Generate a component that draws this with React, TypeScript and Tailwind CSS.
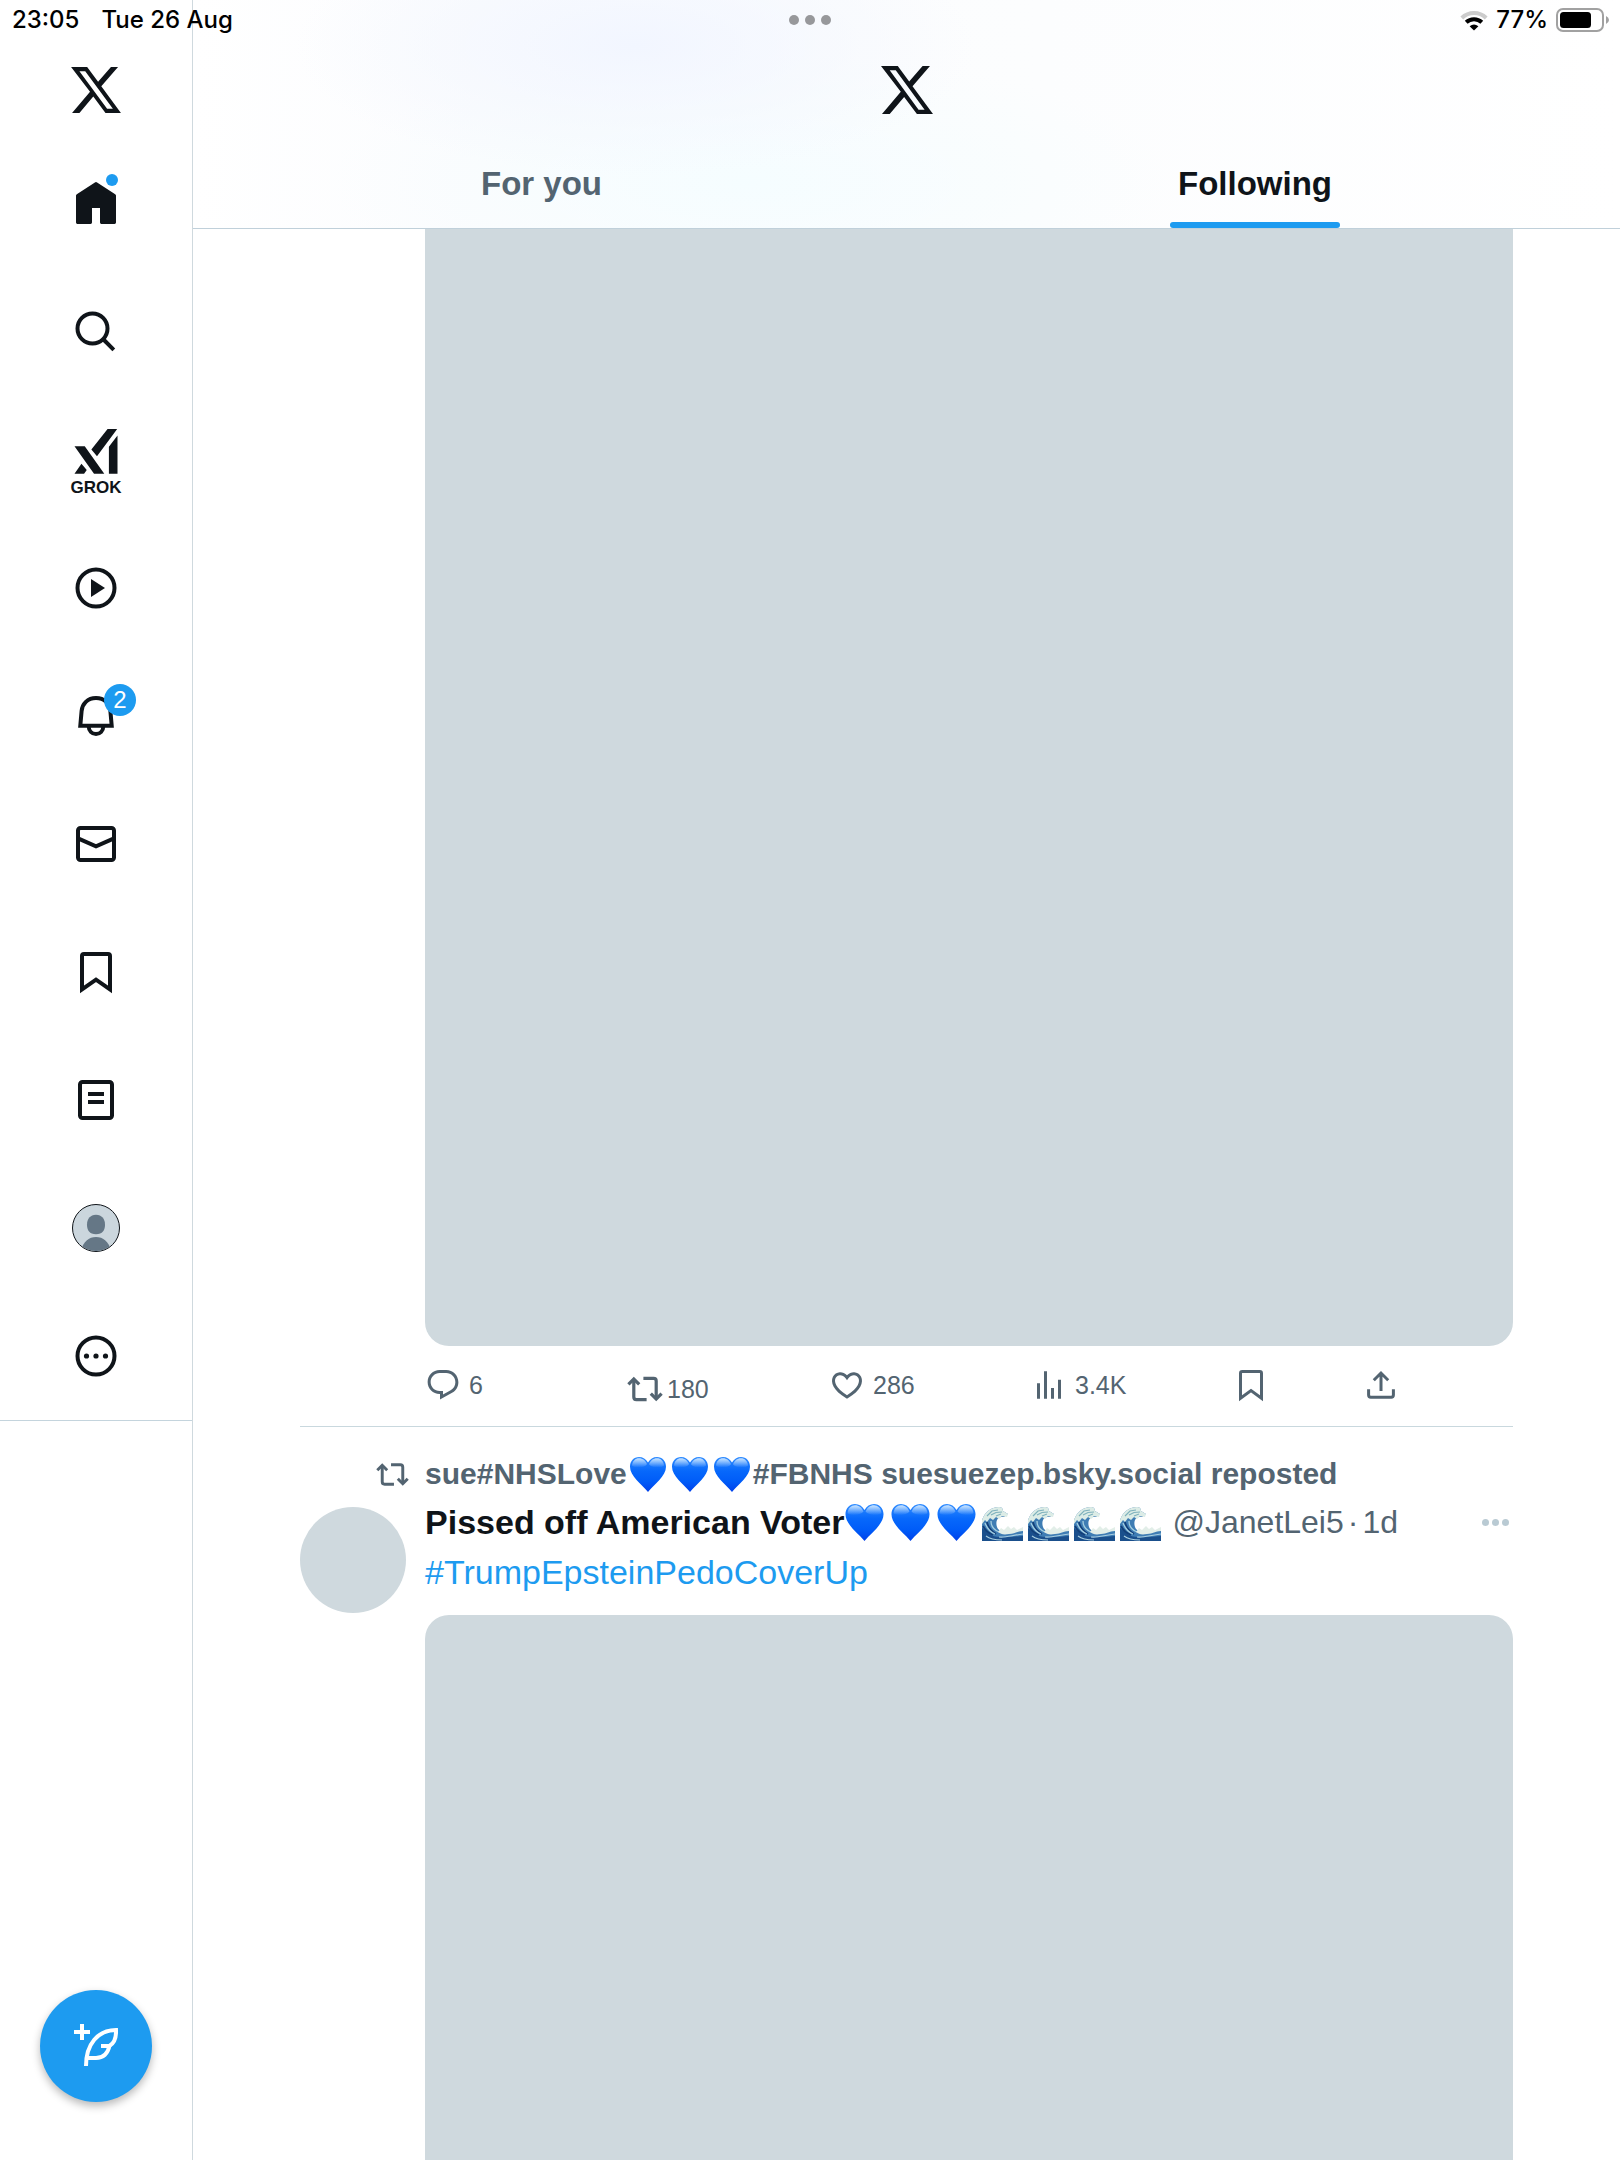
import React from "react";

type IconProps = { className?: string };

function XLogo({ className }: IconProps) {
  return (
    <svg viewBox="544 199 155 143" className={className} fill="currentColor" aria-hidden="true">
      <path
        fillRule="evenodd"
        d="M544 199H594L628 245L668 199H690L638 259L699 342H651L613 291L570 342H547L603 276ZM570 212L656 329H674L588 212Z"
      />
    </svg>
  );
}

function NavIcon({ children }: { children: React.ReactNode }) {
  return (
    <svg
      viewBox="0 0 48 48"
      className="size-12 overflow-visible"
      fill="none"
      stroke="currentColor"
      strokeWidth="4"
      aria-hidden="true"
    >
      {children}
    </svg>
  );
}

const HomeIcon = () => (
  <NavIcon>
    <path
      stroke="none"
      fill="currentColor"
      d="M22.9 2.4Q24 1.6 25.1 2.4L43.2 14.2Q44 14.8 44 15.6V42.6Q44 44 42.6 44H29.4Q28 44 28 42.6V28H20V42.6Q20 44 18.6 44H5.4Q4 44 4 42.6V15.6Q4 14.8 4.8 14.2Z"
    />
  </NavIcon>
);

const SearchIcon = () => (
  <NavIcon>
    <circle cx="20.5" cy="20.5" r="15" />
    <path d="M31 31L41.8 41.8" />
  </NavIcon>
);

const GrokIcon = () => (
  <span className="flex flex-col items-center gap-1 pt-1.5">
    <svg viewBox="103 447 132 136" className="h-[45px] w-[44px]" fill="currentColor" aria-hidden="true">
      <path d="M104 499H135L194 582H163ZM104 582L125 552L141 571L133 582ZM204 447H233L172 529L155 509ZM234 467V582H208V501Z" />
    </svg>
    <span className="text-[17px] leading-5 font-bold">GROK</span>
  </span>
);

const PlayIcon = () => (
  <NavIcon>
    <circle cx="24" cy="24" r="18.5" />
    <path stroke="none" fill="currentColor" d="M19 15L33 24L19 33Z" />
  </NavIcon>
);

const BellIcon = () => (
  <NavIcon>
    <path d="M24 6C15.5 6 10.2 12 9.6 19L8.3 33.8H39.7L38.4 19C37.8 12 32.5 6 24 6Z" />
    <path d="M16.6 34C16.8 39 20 42 24 42C28 42 31.2 39 31.4 34" />
  </NavIcon>
);

const MailIcon = () => (
  <NavIcon>
    <rect x="6" y="8" width="36" height="32" rx="2.5" />
    <path d="M6 18.4L24 26.4L42 18.4" />
  </NavIcon>
);

const BookmarkIcon = () => (
  <NavIcon>
    <path d="M10 41.4V8Q10 6 12 6H36Q38 6 38 8V41.4L24 31.6Z" />
  </NavIcon>
);

const ListIcon = () => (
  <NavIcon>
    <rect x="8" y="6" width="32" height="36" rx="2.5" />
    <path d="M16 18H32M16 26H32" />
  </NavIcon>
);

const ProfileIcon = () => (
  <span className="block size-12 overflow-hidden rounded-full border border-[#0f1419] bg-[#cbd6dd]">
    <svg viewBox="1 1 46 46" className="size-full" fill="#657786" aria-hidden="true">
      <path d="M24 10.7C29.8 10.7 33 15 33 20.5C33 26.5 30.5 30.2 24 30.2C17.5 30.2 15 26.5 15 20.5C15 15 18.2 10.7 24 10.7Z" />
      <path d="M9 47C11 37.5 17 33 24 33C31 33 37 37.5 39 47Z" />
    </svg>
  </span>
);

const MoreIcon = () => (
  <NavIcon>
    <circle cx="24" cy="24" r="18.5" />
    <g stroke="none" fill="currentColor">
      <circle cx="14.5" cy="24" r="2.6" />
      <circle cx="24" cy="24" r="2.6" />
      <circle cx="33.5" cy="24" r="2.6" />
    </g>
  </NavIcon>
);

const navItems = [
  { label: "Home", Icon: HomeIcon, dot: true },
  { label: "Search", Icon: SearchIcon },
  { label: "Grok", Icon: GrokIcon },
  { label: "Video", Icon: PlayIcon },
  { label: "Notifications", Icon: BellIcon, badge: "2" },
  { label: "Messages", Icon: MailIcon },
  { label: "Bookmarks", Icon: BookmarkIcon },
  { label: "Lists", Icon: ListIcon },
  { label: "Profile", Icon: ProfileIcon },
  { label: "More", Icon: MoreIcon },
];

function Sidebar() {
  return (
    <aside className="flex w-[193px] shrink-0 flex-col items-center border-r border-[#cfd9de] bg-white">
      <a href="#home" aria-label="X" className="mt-[67px] mb-[27px]">
        <XLogo className="h-[46px] w-[50px]" />
      </a>
      <nav className="w-full border-b border-[#c4d4dd]">
        {navItems.map(({ label, Icon, dot, badge }) => (
          <a key={label} href="#nav" aria-label={label} className="flex h-32 items-center justify-center">
            <span className="relative">
              <Icon />
              {dot && <span className="absolute -top-1.5 right-0.5 size-3 rounded-full bg-[#1d9bf0]" />}
              {badge && (
                <span className="absolute -top-2 left-8 flex size-8 items-center justify-center rounded-full bg-[#1d9bf0] text-2xl leading-none text-white">
                  {badge}
                </span>
              )}
            </span>
          </a>
        ))}
      </nav>
      <button
        type="button"
        aria-label="Compose post"
        className="mt-auto mb-[58px] flex size-28 items-center justify-center rounded-full bg-[#1d9bf0] text-white shadow-[0_4px_8px_rgba(0,0,0,0.28)]"
      >
        <svg viewBox="162 192 132 132" className="size-11" fill="none" stroke="currentColor" strokeWidth="12" aria-hidden="true">
          <path d="M186 192V240M162 216H210" />
          <path d="M198 318C198 252 234 210 288 210C289 232 284 249 268 258H243" />
          <path d="M269 256C263 282 247 294 228 294H200" />
        </svg>
      </button>
    </aside>
  );
}

function StatusBar() {
  return (
    <div className="absolute inset-x-0 top-0 grid h-10 grid-cols-3 items-center px-2.5 font-['Inter',sans-serif] text-2xl leading-10 font-medium text-black">
      <div className="flex gap-[22px] pl-0.5">
        <span>23:05</span>
        <span>Tue 26 Aug</span>
      </div>
      <div className="flex justify-center gap-1.5">
        <span className="size-2.5 rounded-full bg-[#97989b]" />
        <span className="size-2.5 rounded-full bg-[#97989b]" />
        <span className="size-2.5 rounded-full bg-[#97989b]" />
      </div>
      <div className="flex items-center justify-end">
        <svg viewBox="0 0 28 21" className="mr-2 h-[21px] w-[28px]" fill="none" aria-hidden="true">
          <path d="M1.8 8A17.5 17.5 0 0 1 26.2 8" stroke="#cccccc" strokeWidth="4" />
          <path d="M6.2 12.3A11.2 11.2 0 0 1 21.8 12.3" stroke="#000" strokeWidth="4" />
          <path d="M14 20.5L9.6 16.3Q14 12.8 18.4 16.3Z" fill="#000" />
        </svg>
        <span>77%</span>
        <svg viewBox="0 0 54 24" className="ml-2 h-6 w-[54px]" aria-hidden="true">
          <rect x="1" y="1" width="46" height="22" rx="6" fill="none" stroke="#a1a1a1" strokeWidth="2" />
          <rect x="4" y="4" width="31" height="16" rx="3.5" fill="#000" />
          <path d="M50 8Q53 9.5 53 12Q53 14.5 50 16Z" fill="#a1a1a1" />
        </svg>
      </div>
    </div>
  );
}

function Header() {
  return (
    <header className="flex h-[229px] flex-col items-center border-b border-[#c0d0da] bg-[radial-gradient(ellipse_340px_130px_at_31%_20%,#f2f6ff,transparent),radial-gradient(ellipse_420px_130px_at_39%_80%,#f5fdff,transparent),linear-gradient(90deg,#ffffff,#fbfcfe_20%,#fcfdfe_60%,#ffffff)]">
      <XLogo className="mt-[66px] h-12 w-[52px]" />
      <div role="tablist" className="mt-auto flex w-full text-[33px] leading-10 font-bold">
        <button type="button" role="tab" aria-selected="false" className="flex flex-auto justify-center text-[#536471]">
          <span className="px-2 pb-6">For you</span>
        </button>
        <button type="button" role="tab" aria-selected="true" className="flex flex-auto justify-center text-[#0f1419]">
          <span className="flex flex-col">
            <span className="px-2 pb-[18px]">Following</span>
            <span className="h-1.5 rounded-full bg-[#1d9bf0]" />
          </span>
        </button>
      </div>
    </header>
  );
}

function RepostIcon({ className }: IconProps) {
  return (
    <svg viewBox="0 0 36 36" className={className} fill="none" stroke="currentColor" strokeWidth="3.2" aria-hidden="true">
      <path d="M6.8 8V26Q6.8 28.6 9.4 28.6H19.6M16.4 7.4H26.6Q29.2 7.4 29.2 10V28" />
      <path d="M1.4 13.4L6.8 8L12.2 13.4M23.8 22.6L29.2 28L34.6 22.6" />
    </svg>
  );
}

function ReplyIcon() {
  return (
    <svg viewBox="0 0 24 24" className="size-9" fill="currentColor" aria-hidden="true">
      <path d="M1.751 10c0-4.42 3.584-8 8.005-8h4.366c4.49 0 8.129 3.64 8.129 8.13 0 2.96-1.607 5.68-4.196 7.11l-8.054 4.46v-3.69h-.067c-4.49.1-8.183-3.51-8.183-8.01zm8.005-6c-3.317 0-6.005 2.69-6.005 6 0 3.37 2.77 6.08 6.138 6.01l.351-.01h1.761v2.3l5.087-2.81c1.951-1.08 3.163-3.13 3.163-5.36 0-3.39-2.744-6.13-6.129-6.13H9.756z" />
    </svg>
  );
}

function HeartIcon() {
  return (
    <svg viewBox="0 0 24 24" className="size-9" fill="currentColor" aria-hidden="true">
      <path d="M16.697 5.5c-1.222-.06-2.679.51-3.89 2.16l-.805 1.09-.806-1.09C9.984 6.01 8.526 5.44 7.304 5.5c-1.243.07-2.349.78-2.91 1.91-.552 1.12-.633 2.78.479 4.82 1.074 1.97 3.257 4.27 7.129 6.61 3.87-2.34 6.052-4.64 7.126-6.61 1.111-2.04 1.03-3.7.477-4.82-.561-1.13-1.666-1.84-2.908-1.91zm4.187 7.69c-1.351 2.48-4.001 5.12-8.379 7.67l-.503.3-.504-.3c-4.379-2.55-7.029-5.19-8.382-7.67-1.36-2.5-1.41-4.86-.514-6.67.887-1.79 2.647-2.91 4.601-3.01 1.651-.09 3.368.56 4.798 2.01 1.429-1.45 3.146-2.1 4.796-2.01 1.954.1 3.714 1.22 4.601 3.01.896 1.81.846 4.17-.514 6.67z" />
    </svg>
  );
}

function ViewsIcon() {
  return (
    <svg viewBox="0 0 36 36" className="size-9" fill="currentColor" aria-hidden="true">
      <path d="M6 16.3H9V31.8H6ZM13 4.3H16V31.8H13ZM20 21H23V31.8H20ZM27 12.7H30V31.8H27Z" />
    </svg>
  );
}

function SaveIcon() {
  return (
    <svg viewBox="0 0 36 36" className="size-9" fill="none" stroke="currentColor" strokeWidth="3" aria-hidden="true">
      <path d="M7.5 31.2V6.3Q7.5 4.5 9.3 4.5H26.7Q28.5 4.5 28.5 6.3V31.2L18 23.6Z" />
    </svg>
  );
}

function ShareIcon() {
  return (
    <svg viewBox="0 0 36 36" className="size-9" fill="none" stroke="currentColor" strokeWidth="3" aria-hidden="true">
      <path d="M18 24V6M10.8 13.2L18 6L25.2 13.2M5.6 22.3V28Q5.6 30.2 7.8 30.2H28.2Q30.4 30.2 30.4 28V22.3" />
    </svg>
  );
}

function BlueHeart({ className }: IconProps) {
  return (
    <svg viewBox="0 0 36 35" className={className} role="img" aria-label="blue heart">
      <defs>
        <linearGradient id="heartBody" x1="0" y1="0" x2="0" y2="1">
          <stop offset="0" stopColor="#2f8cff" />
          <stop offset="0.4" stopColor="#0768fb" />
          <stop offset="0.7" stopColor="#005cf8" />
          <stop offset="1" stopColor="#0040ea" />
        </linearGradient>
        <linearGradient id="heartShine" x1="0" y1="0" x2="0" y2="1">
          <stop offset="0" stopColor="#c8e3ff" />
          <stop offset="1" stopColor="#c8e3ff" stopOpacity="0" />
        </linearGradient>
      </defs>
      <path
        d="M18 5.6C20 2 23.2 0 27 0C32.2 0 36 4 36 9.8C36 19.4 24.5 27 18 35C11.5 27 0 19.4 0 9.8C0 4 3.8 0 9 0C12.8 0 16 2 18 5.6Z"
        fill="url(#heartBody)"
      />
      <path d="M2 8.5C2.4 4 5.4 1.3 9 1.3C12.8 1.3 15.6 3.6 17 7.2C14.5 11 4 11.5 2 8.5Z" fill="url(#heartShine)" />
      <path d="M34 8.5C33.6 4 30.6 1.3 27 1.3C23.2 1.3 20.4 3.6 19 7.2C21.5 11 32 11.5 34 8.5Z" fill="url(#heartShine)" />
    </svg>
  );
}

function Wave({ className }: IconProps) {
  return (
    <svg viewBox="0 0 41 34" className={className} role="img" aria-label="water wave">
      <path d="M0 34V13C3 5 9 0 17 0C20 0 21 2 21 4L26 7L22 10C16 9 13 14 15 20C17 26 27 25 41 23V34Z" fill="#3f7db4" />
      <path d="M0 34V21C5 25 9 30 18 30C27 31 35 29 41 29V34Z" fill="#1a4f8c" />
      <path d="M0 13C3 5 9 0 17 0C20 0 21 2 21 4L26 7L25 10L20 9L17 12L14 10L11 13L8 11L5 15L3 13L0 17Z" fill="#dcece6" />
      <path d="M5 9L10 4L16 3M9 8L14 5.5L20 5M14 9L19 7" stroke="#7fb2bd" strokeWidth="1.2" fill="none" />
      <path d="M1 19C3 23 6 26 11 28M5 15C6 20 9 24 14 27" stroke="#123f78" strokeWidth="1.8" fill="none" />
      <path d="M3 16C5 21 8 25 13 27M9 14C9 19 12 23 17 25" stroke="#a5cfe0" strokeWidth="1.3" fill="none" />
      <path d="M16 25L19 21L22 23L26 19L29 22L32 20L35 23L41 20V24C35 24 33 27 27 27C21 28 19 27 16 25Z" fill="#e2eee8" />
      <path d="M17 30C23 31 31 28 41 27M4 29C9 33 15 33 20 33" stroke="#a9cfe0" strokeWidth="1.2" fill="none" />
    </svg>
  );
}

const actions = [
  { label: "Reply", count: "6", icon: <ReplyIcon />, style: "gap-2" },
  { label: "Repost", count: "180", icon: <RepostIcon className="size-9" />, style: "gap-1 pt-1" },
  { label: "Like", count: "286", icon: <HeartIcon />, style: "gap-2" },
  { label: "Views", count: "3.4K", icon: <ViewsIcon />, style: "gap-2" },
  { label: "Bookmark", count: "", icon: <SaveIcon />, style: "gap-2" },
  { label: "Share", count: "", icon: <ShareIcon />, style: "gap-2" },
];

function FirstPost() {
  return (
    <article className="border-b border-[#c9d8de] pb-[19px] pl-[125px]">
      <div className="h-[1117px] rounded-b-3xl bg-[#cfd9de]" />
      <div className="mt-[21px] grid grid-cols-[202fr_202fr_202fr_202fr_130fr_150fr] text-[#536471]">
        {actions.map(({ label, count, icon, style }) => (
          <button key={label} type="button" aria-label={`${label} ${count}`} className={`flex h-10 items-start text-[25px] leading-9 ${style}`}>
            {icon}
            {count && <span>{count}</span>}
          </button>
        ))}
      </div>
    </article>
  );
}

function SecondPost() {
  return (
    <article className="flex flex-1 flex-col pt-6">
      <div className="flex h-[46px] items-center text-[30px] leading-[46px] font-bold whitespace-nowrap text-[#536471]">
        <span className="flex w-[125px] shrink-0 justify-end pr-4">
          <RepostIcon className="size-[33px]" />
        </span>
        <span>sue#NHSLove</span>
        <span className="mx-[3px] flex gap-1.5">
          <BlueHeart className="h-[35px] w-9" />
          <BlueHeart className="h-[35px] w-9" />
          <BlueHeart className="h-[35px] w-9" />
        </span>
        <span>#FBNHS suesuezep.bsky.social reposted</span>
      </div>
      <div className="flex flex-1 gap-[19px]">
        <div className="mt-2.5 size-[106px] shrink-0 rounded-full bg-[#cfd9de]" />
        <div className="flex min-w-0 flex-1 flex-col">
          <div className="flex h-[50px] items-center text-[34px] leading-[50px] whitespace-nowrap text-[#536471]">
            <span className="font-bold text-[#0f1419]">Pissed off American Voter</span>
            <span className="flex items-center gap-[7px]">
              <BlueHeart className="h-[37px] w-[39px]" />
              <BlueHeart className="h-[37px] w-[39px]" />
              <BlueHeart className="h-[37px] w-[39px]" />
            </span>
            <span className="mt-1 mr-3 ml-1.5 flex items-center gap-[5px]">
              <Wave className="h-[34px] w-[41px]" />
              <Wave className="h-[34px] w-[41px]" />
              <Wave className="h-[34px] w-[41px]" />
              <Wave className="h-[34px] w-[41px]" />
            </span>
            <span className="flex gap-1 text-[32px]">
              <span>@JanetLei5</span>
              <span>·</span>
              <span>1d</span>
            </span>
            <button type="button" aria-label="More options" className="mr-1 ml-auto flex gap-[3px]">
              <span className="size-[7px] rounded-full bg-[#b9cad3]" />
              <span className="size-[7px] rounded-full bg-[#b9cad3]" />
              <span className="size-[7px] rounded-full bg-[#b9cad3]" />
            </button>
          </div>
          <a href="#tag" className="text-[34px] leading-[50px] text-[#1d9bf0]">
            #TrumpEpsteinPedoCoverUp
          </a>
          <div className="mt-[18px] min-h-[300px] flex-1 rounded-t-3xl bg-[#cfd9de]" />
        </div>
      </div>
    </article>
  );
}

export default function App() {
  return (
    <div className="relative flex min-h-screen bg-white font-['Liberation_Sans',sans-serif] text-[#0f1419]">
      <Sidebar />
      <main className="flex min-w-0 flex-1 flex-col">
        <Header />
        <div className="mx-auto flex w-[85%] flex-1 flex-col">
          <FirstPost />
          <SecondPost />
        </div>
      </main>
      <StatusBar />
    </div>
  );
}
